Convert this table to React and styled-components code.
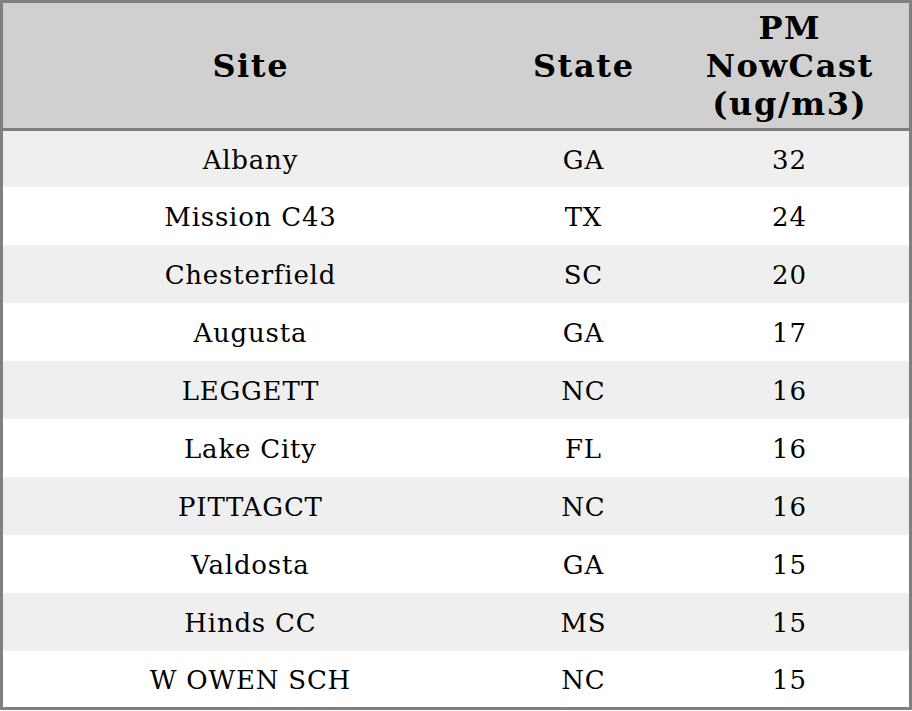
import React from "react";
import styled, { createGlobalStyle } from "styled-components";

const GlobalStyle = createGlobalStyle`
  html, body {
    margin: 0;
    padding: 0;
    background: #ffffff;
  }
  body {
    font-family: "DejaVu Serif", "Liberation Serif", serif;
    color: #000000;
  }
`;

const Table = styled.div`
  width: 912px;
  box-sizing: border-box;
  border: 3px solid #808080;
  background: #ffffff;
`;

const Row = styled.div`
  display: grid;
  grid-template-columns: 494px 172px 1fr;
  align-items: center;
  height: ${(p) => p.$h}px;
  background: ${(p) => (p.$striped ? "#efefef" : "#ffffff")};
`;

const HeadRow = styled(Row)`
  height: 125px;
  background: #d0d0d0;
  border-bottom: 3px solid #808080;
`;

const HeadCell = styled.div`
  text-align: center;
  font-weight: bold;
  font-size: 32px;
  line-height: 38px;
  letter-spacing: 1.6px;
  padding-left: 1.6px;
`;

const Cell = styled.div`
  text-align: center;
  font-size: 26px;
  line-height: 30px;
  letter-spacing: 0.8px;
  padding-left: 0.8px;
  padding-top: 2px;
`;

const rows = [
  ["Albany", "GA", 32],
  ["Mission C43", "TX", 24],
  ["Chesterfield", "SC", 20],
  ["Augusta", "GA", 17],
  ["LEGGETT", "NC", 16],
  ["Lake City", "FL", 16],
  ["PITTAGCT", "NC", 16],
  ["Valdosta", "GA", 15],
  ["Hinds CC", "MS", 15],
  ["W OWEN SCH", "NC", 15],
];

export default function App() {
  return (
    <>
      <GlobalStyle />
      <Table>
        <HeadRow>
          <HeadCell>Site</HeadCell>
          <HeadCell>State</HeadCell>
          <HeadCell>
            PM
            <br />
            NowCast
            <br />
            (ug/m3)
          </HeadCell>
        </HeadRow>
        {rows.map(([site, state, value], i) => (
          <Row
            key={site}
            $striped={i % 2 === 0}
            $h={i === 0 || i === rows.length - 1 ? 56 : 58}
          >
            <Cell>{site}</Cell>
            <Cell>{state}</Cell>
            <Cell>{value}</Cell>
          </Row>
        ))}
      </Table>
    </>
  );
}
